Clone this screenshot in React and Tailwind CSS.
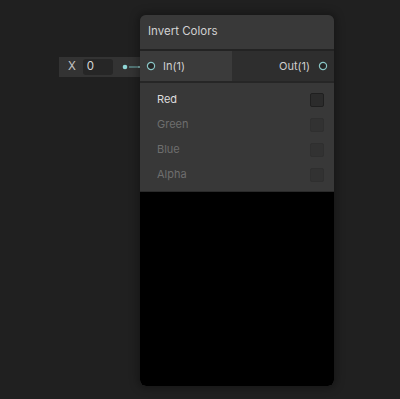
export default function App() {
  const options = [
    { name: "Red", active: true },
    { name: "Green", active: false },
    { name: "Blue", active: false },
    { name: "Alpha", active: false },
  ]

  return (
    <div
      className="relative w-[400px] h-[399px] bg-[#202020] overflow-hidden"
      style={{ fontFamily: "Inter, 'Noto Sans', sans-serif" }}
    >
      {/* inline value field connected to In(1) */}
      <div className="absolute left-[59px] top-[57px] w-[82px] h-[20px] bg-[#333333] flex items-center">
        <span className="ml-[9px] text-[11.5px] text-[#c4c4c4]">X</span>
        <div className="ml-[7px] w-[30px] h-[16px] rounded-[3px] bg-[#262626] flex items-center px-[4px] text-[11.5px] text-[#d6d6d6]">
          0
        </div>
      </div>
      <svg className="absolute left-[120px] top-[60px]" width="40" height="14" viewBox="0 0 40 14">
        <line x1="9" y1="7" x2="27" y2="7" stroke="#5f8e8e" strokeWidth="1.5" />
        <line x1="18" y1="7" x2="27" y2="7" stroke="#8ab8b8" strokeWidth="1.5" />
        <circle cx="5" cy="7" r="2.3" fill="#8fd6d6" />
      </svg>

      {/* node */}
      <div className="absolute left-[140px] top-[15px] w-[194px] h-[371px] rounded-[6px] bg-[#2c2c2c] shadow-[0_0_8px_2px_rgba(0,0,0,0.35)] flex flex-col overflow-hidden">
        <div className="h-[34px] bg-[#393939] flex items-center px-[8px] text-[11.5px] text-[#d2d2d2]">
          Invert Colors
        </div>
        <div className="h-[2px] bg-[#232323]" />
        <div className="h-[30px] flex">
          <div className="w-[92px] bg-[#3b3b3b] flex items-center">
            <svg className="ml-[6px]" width="10" height="10" viewBox="0 0 10 10">
              <circle cx="5" cy="5" r="3.6" fill="#252525" stroke="#88c4c4" strokeWidth="1.2" />
            </svg>
            <span className="ml-[7px] text-[11px] text-[#cfcfcf]">In(1)</span>
          </div>
          <div className="flex-1 bg-[#2e2e2e] flex items-center justify-end">
            <span className="text-[11px] text-[#cfcfcf]">Out(1)</span>
            <svg className="ml-[8px] mr-[6px]" width="10" height="10" viewBox="0 0 10 10">
              <circle cx="5" cy="5" r="3.6" fill="#252525" stroke="#88c4c4" strokeWidth="1.2" />
            </svg>
          </div>
        </div>
        <div className="h-[2px] bg-[#262626]" />
        <div className="h-[108px] bg-[#383838] flex flex-col pt-[4px]">
          {options.map((o) => (
            <div key={o.name} className="h-[25px] flex items-center justify-between pl-[17px] pr-[10px]">
              <span className={`text-[11px] ${o.active ? "text-[#dcdcdc]" : "text-[#6e6e6e]"}`}>{o.name}</span>
              <div
                className={`w-[14px] h-[14px] rounded-[2px] ${
                  o.active ? "bg-[#2b2b2b] border border-[#1f1f1f]" : "bg-[#323232] border border-[#2f2f2f]"
                }`}
              />
            </div>
          ))}
        </div>
        <div className="h-[1px] bg-[#2a2a2a]" />
        <div className="flex-1 bg-black rounded-b-[6px]" />
      </div>
    </div>
  )
}
